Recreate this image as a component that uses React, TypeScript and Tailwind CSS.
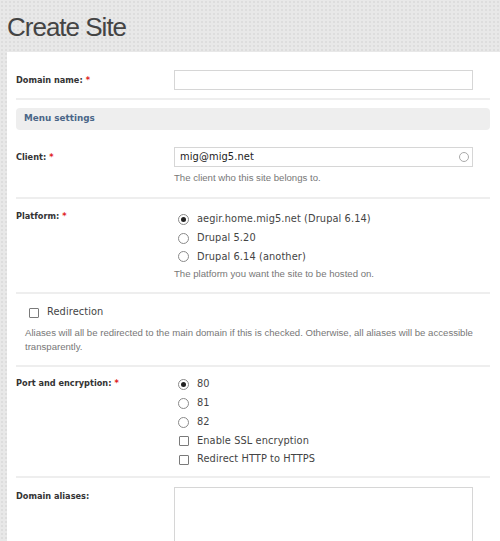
import React from "react";

const sans = "font-['DejaVu_Sans',sans-serif]";
const arial = "font-['Liberation_Sans',Arial,sans-serif]";

function Label({ text, required }: { text: string; required?: boolean }) {
  return (
    <div className={`w-[158px] shrink-0 text-[8.2px] leading-[12px] font-bold text-[#333] ${sans}`}>
      {text}
      {required && <span className="ml-[3px] text-[#e02020]">*</span>}
    </div>
  );
}

function Radio({ label, checked }: { label: string; checked?: boolean }) {
  return (
    <div className="flex h-[18.75px] items-center pl-[4px]">
      <span className="flex h-[11px] w-[11px] items-center justify-center rounded-full border border-[#8a8a8a] bg-white">
        {checked && <span className="h-[5px] w-[5px] rounded-full bg-[#222]" />}
      </span>
      <span className={`ml-[8px] text-[9.8px] tracking-[0.1px] text-[#444] ${sans}`}>{label}</span>
    </div>
  );
}

function Check({ label }: { label: string }) {
  return (
    <div className="flex h-[18.75px] items-center pl-[5px]">
      <span className="h-[10px] w-[10px] rounded-[1px] border border-[#7a7a7a] bg-white" />
      <span className={`ml-[8px] text-[9.8px] tracking-[0.1px] text-[#444] ${sans}`}>{label}</span>
    </div>
  );
}

function Help({ children }: { children: React.ReactNode }) {
  return <div className={`text-[9.6px] leading-[14px] text-[#777] ${arial}`}>{children}</div>;
}

export default function App() {
  return (
    <div className="min-h-screen overflow-hidden bg-[#e8e8e8] bg-[radial-gradient(#dddddd_0.8px,transparent_0.9px)] bg-[length:4px_4px]">
      <h1 className={`h-[52px] pl-[7px] pt-[14px] text-[26px] leading-none tracking-[-1px] text-[#444] ${arial}`}>
        Create Site
      </h1>

      <div className="ml-[7px] bg-white pl-[9px] pr-[10px] pb-[40px]">
        <div className="w-[474px]">
          {/* Domain name */}
          <div className="flex border-b-2 border-[#eeeeee] pt-[18px] pb-[8px]">
            <div className="flex items-center">
              <Label text="Domain name:" required />
            </div>
            <div className="h-[20px] w-[299px] border border-[#d6d6d6] bg-white" />
          </div>

          {/* Menu settings */}
          <div className={`mt-[8px] flex h-[22px] items-center rounded-[4px] bg-[#eeeeee] pl-[8px] text-[8.8px] font-bold text-[#4a6688] ${sans}`}>
            Menu settings
          </div>

          {/* Client */}
          <div className="flex border-b-2 border-[#eeeeee] pt-[17px] pb-[12px]">
            <div className="flex h-[20px] items-center">
              <Label text="Client:" required />
            </div>
            <div className="w-[299px]">
              <div className="flex h-[20px] items-center justify-between border border-[#d6d6d6] bg-white pl-[5px] pr-[3px]">
                <span className={`text-[9.9px] tracking-[0.1px] text-[#222] ${sans}`}>mig@mig5.net</span>
                <span className="h-[10px] w-[10px] rounded-full border-[1.5px] border-[#aaaaaa]" />
              </div>
              <div className="mt-[4px]">
                <Help>The client who this site belongs to.</Help>
              </div>
            </div>
          </div>

          {/* Platform */}
          <div className="flex border-b-2 border-[#eeeeee] pt-[11px] pb-[11px]">
            <Label text="Platform:" required />
            <div className="w-[299px]">
              <Radio label="aegir.home.mig5.net (Drupal 6.14)" checked />
              <Radio label="Drupal 5.20" />
              <Radio label="Drupal 6.14 (another)" />
              <div className="mt-[1px]">
                <Help>The platform you want the site to be hosted on.</Help>
              </div>
            </div>
          </div>

          {/* Redirection */}
          <div className="border-b-2 border-[#eeeeee] pt-[9px] pb-[11px] pl-[9px]">
            <div className="flex h-[19px] items-center pl-[4px]">
              <span className="h-[10px] w-[10px] rounded-[1px] border border-[#7a7a7a] bg-white" />
              <span className={`ml-[8px] text-[9.8px] tracking-[0.1px] text-[#444] ${sans}`}>Redirection</span>
            </div>
            <div className="mt-[4px] w-[460px]">
              <Help>
                Aliases will all be redirected to the main domain if this is checked. Otherwise, all aliases will be
                accessible transparently.
              </Help>
            </div>
          </div>

          {/* Port and encryption */}
          <div className="flex border-b-2 border-[#eeeeee] pt-[8px] pb-[7px]">
            <div className="pt-[2px]">
              <Label text="Port and encryption:" required />
            </div>
            <div className="w-[299px]">
              <Radio label="80" checked />
              <Radio label="81" />
              <Radio label="82" />
              <Check label="Enable SSL encryption" />
              <Check label="Redirect HTTP to HTTPS" />
            </div>
          </div>

          {/* Domain aliases */}
          <div className="flex pt-[9px]">
            <div className="pt-[3px]">
              <Label text="Domain aliases:" />
            </div>
            <div className="h-[90px] w-[299px] border border-[#d6d6d6] bg-white" />
          </div>
        </div>
      </div>
    </div>
  );
}
